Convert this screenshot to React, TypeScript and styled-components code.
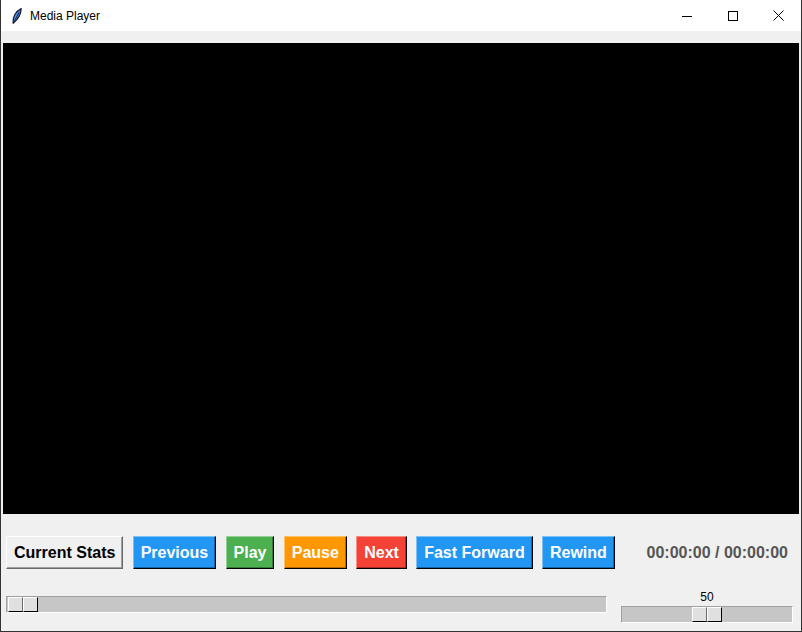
import React from "react";
import styled, { createGlobalStyle } from "styled-components";

const Global = createGlobalStyle`
  html, body { margin: 0; padding: 0; background: #ffffff; }
  * { box-sizing: border-box; }
`;

const Window = styled.div`
  width: 802px;
  height: 632px;
  display: flex;
  flex-direction: column;
  border-left: 1px solid #333333;
  border-right: 1px solid #333333;
  border-bottom: 1px solid #333333;
  background: #f0f0f0;
  font-family: "Liberation Sans", Arial, sans-serif;
  overflow: hidden;
`;

const TitleBar = styled.div`
  height: 31px;
  flex: none;
  display: flex;
  align-items: center;
  background: #ffffff;
`;

const AppIcon = styled.svg`
  width: 10px;
  height: 16px;
  margin-left: 11px;
`;

const Title = styled.span`
  margin-left: 8px;
  font-size: 12px;
  color: #000000;
  margin-top: 1px;
`;

const Controls = styled.div`
  margin-left: auto;
  display: flex;
  height: 100%;
`;

const CtrlButton = styled.div<{ $w: number }>`
  width: ${(p) => p.$w}px;
  height: 100%;
  display: flex;
  align-items: center;
  justify-content: center;
`;

const Content = styled.div`
  flex: 1;
  display: flex;
  flex-direction: column;
`;

const Video = styled.div`
  margin: 12px 2px 0;
  height: 471px;
  background: #000000;
  flex: none;
`;

const ButtonRow = styled.div`
  margin-top: 22px;
  padding-left: 5px;
  display: flex;
  align-items: center;
  gap: 9.3px;
  height: 33px;
`;

const ActionButton = styled.button<{ $bg: string; $light: string; $dark: string; $fg: string; $outer: string }>`
  height: 33px;
  padding: 0 7px;
  margin: 0;
  font-family: "Liberation Sans", Arial, sans-serif;
  font-weight: bold;
  font-size: 16px;
  line-height: 1;
  color: ${(p) => p.$fg};
  background: ${(p) => p.$bg};
  border-style: solid;
  border-width: 1px;
  border-color: ${(p) => p.$light} ${(p) => p.$outer} ${(p) => p.$outer} ${(p) => p.$light};
  box-shadow: inset -1px -1px 0 ${(p) => p.$dark}, inset 1px 1px 0 ${(p) => p.$bg};
  white-space: nowrap;
  cursor: pointer;
  border-radius: 0;
`;

const TimeLabel = styled.span`
  margin-left: auto;
  margin-right: 13px;
  font-weight: bold;
  font-size: 16px;
  color: #555555;
  white-space: nowrap;
`;

const SliderRow = styled.div`
  margin-top: 20px;
  padding-left: 5px;
  display: flex;
  align-items: flex-start;
`;

const Trough = styled.div<{ $w: number }>`
  position: relative;
  width: ${(p) => p.$w}px;
  height: 17px;
  background: #c6c6c6;
  border-style: solid;
  border-width: 1px;
  border-color: #a0a0a0 #ffffff #ffffff #a0a0a0;
`;

const ProgressTrough = styled(Trough)`
  margin-top: 7px;
`;

const Thumb = styled.div`
  position: absolute;
  top: 0;
  width: 30px;
  height: 15px;
  display: flex;
`;

const ThumbHalf = styled.div`
  flex: 1;
  background: #e0e0e0;
  border-style: solid;
  border-width: 1px;
  border-color: #ffffff #000000 #000000 #ffffff;
  &:first-child {
    border-right-color: #696969;
  }
`;

const VolumeBox = styled.div`
  margin-left: 14px;
  display: flex;
  flex-direction: column;
`;

const VolumeValue = styled.div`
  height: 14px;
  font-size: 12px;
  line-height: 14px;
  text-align: center;
  color: #000000;
  margin-top: 1px;
  margin-bottom: 2px;
`;

type Btn = { label: string; bg: string; light: string; dark: string; fg: string; outer: string };

const buttons: Btn[] = [
  { label: "Current Stats", bg: "#f0f0f0", light: "#ffffff", dark: "#a0a0a0", fg: "#000000", outer: "#696969" },
  { label: "Previous", bg: "#2196f3", light: "#7cc0f8", dark: "#1565a8", fg: "#ffffff", outer: "#000000" },
  { label: "Play", bg: "#4caf50", light: "#94cf96", dark: "#357a38", fg: "#ffffff", outer: "#000000" },
  { label: "Pause", bg: "#ff9800", light: "#ffc266", dark: "#b36a00", fg: "#ffffff", outer: "#000000" },
  { label: "Next", bg: "#f44336", light: "#f88e86", dark: "#aa2e25", fg: "#ffffff", outer: "#000000" },
  { label: "Fast Forward", bg: "#2196f3", light: "#7cc0f8", dark: "#1565a8", fg: "#ffffff", outer: "#000000" },
  { label: "Rewind", bg: "#2196f3", light: "#7cc0f8", dark: "#1565a8", fg: "#ffffff", outer: "#000000" },
];

const progress = 0;
const volume = 50;

export default function App() {
  const volWidth = 172;
  const volInner = volWidth - 2;
  const volLeft = 1 + ((volInner - 32) * volume) / 100;
  return (
    <>
      <Global />
      <Window>
        <TitleBar>
          <AppIcon viewBox="0 0 10 16">
            <path d="M1.2 15.3 C0.6 9.5 3.2 3.5 9.2 0.6 C9 6.2 6.4 11.2 1.2 15.3 Z" fill="#4a8de0" stroke="#151a30" strokeWidth="1.2" strokeLinejoin="round" />
            <path d="M1.5 15 L7.2 4.2" stroke="#151a30" strokeWidth="0.9" />
          </AppIcon>
          <Title>Media Player</Title>
          <Controls>
            <CtrlButton $w={46}>
              <svg width="10" height="10" viewBox="0 0 10 10">
                <path d="M0 5.5 H10" stroke="#000" strokeWidth="1" />
              </svg>
            </CtrlButton>
            <CtrlButton $w={46}>
              <svg width="10" height="10" viewBox="0 0 10 10">
                <rect x="0.5" y="0.5" width="9" height="9" fill="none" stroke="#000" strokeWidth="1" />
              </svg>
            </CtrlButton>
            <CtrlButton $w={45}>
              <svg width="11" height="11" viewBox="0 0 11 11">
                <path d="M0.5 0.5 L10.5 10.5 M10.5 0.5 L0.5 10.5" stroke="#000" strokeWidth="1" />
              </svg>
            </CtrlButton>
          </Controls>
        </TitleBar>
        <Content>
          <Video />
          <ButtonRow>
            {buttons.map((b) => (
              <ActionButton key={b.label} $bg={b.bg} $light={b.light} $dark={b.dark} $fg={b.fg} $outer={b.outer}>
                {b.label}
              </ActionButton>
            ))}
            <TimeLabel>00:00:00 / 00:00:00</TimeLabel>
          </ButtonRow>
          <SliderRow>
            <ProgressTrough $w={601}>
              <Thumb style={{ left: 1 + progress * 5.69 }}>
                <ThumbHalf />
                <ThumbHalf />
              </Thumb>
            </ProgressTrough>
            <VolumeBox>
              <VolumeValue>{volume}</VolumeValue>
              <Trough $w={volWidth}>
                <Thumb style={{ left: volLeft }}>
                  <ThumbHalf />
                  <ThumbHalf />
                </Thumb>
              </Trough>
            </VolumeBox>
          </SliderRow>
        </Content>
      </Window>
    </>
  );
}
